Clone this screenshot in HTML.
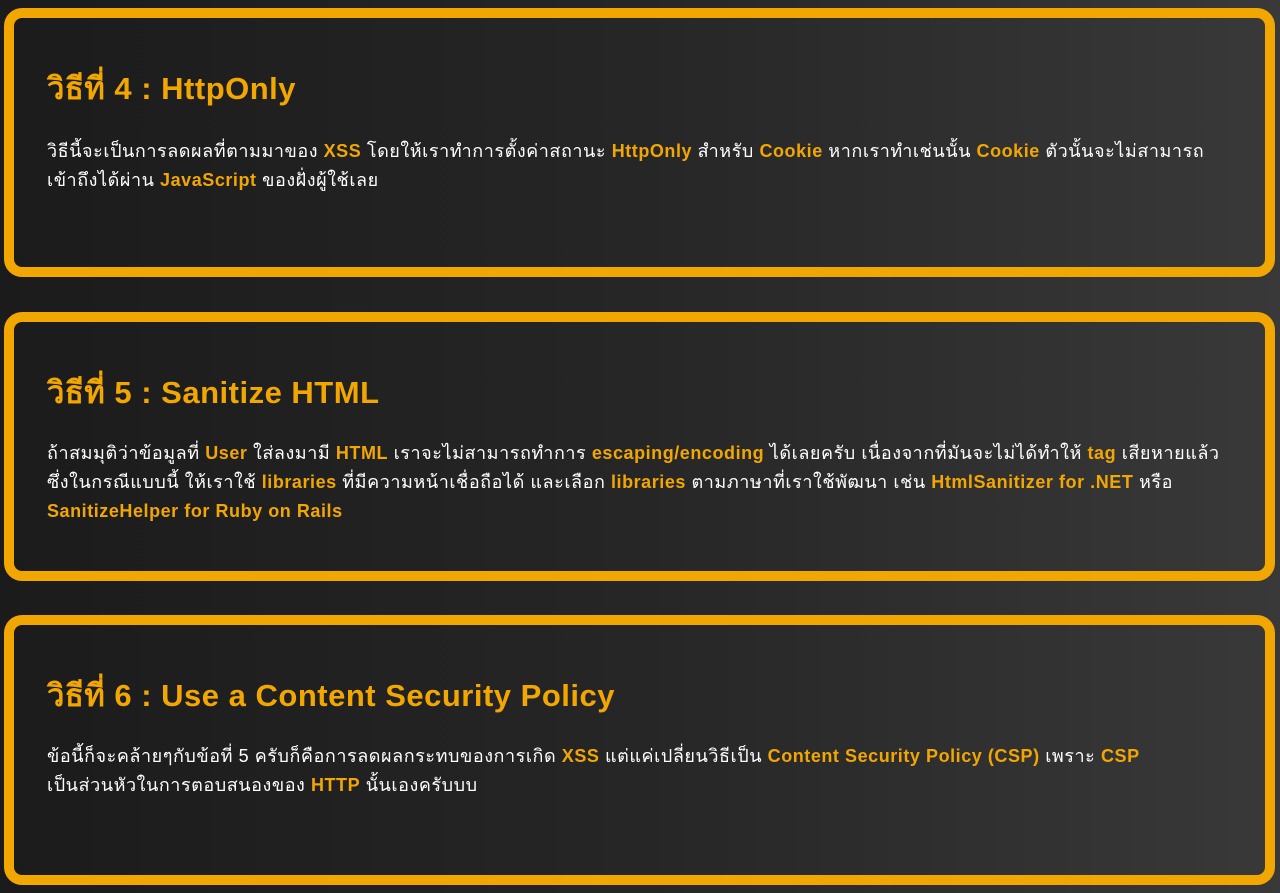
<!DOCTYPE html>
<html><head><meta charset="utf-8"><style>
html,body{margin:0;padding:0}
body{width:1280px;height:893px;overflow:hidden;background:linear-gradient(90deg,#1b1b1b 0%,#262626 50%,#393939 100%);font-family:"Liberation Sans","DejaVu Sans",sans-serif;color:#fff}
.card{position:absolute;left:4px;width:1251px;border:10px solid #f2a600;border-radius:18px;}
h2{position:absolute;left:33px;margin:0;font-size:31px;font-weight:bold;color:#f2a600;white-space:nowrap;letter-spacing:0.5px}
p{position:absolute;left:33px;margin:0;font-size:18px;line-height:29px;white-space:nowrap;letter-spacing:0.55px}
b{color:#f2a600}
</style></head><body>
<div class="card" style="top:8px;height:249px">
<h2 style="top:45px">วิธีที่ 4 : HttpOnly</h2>
<p style="top:119px">วิธีนี้จะเป็นการลดผลที่ตามมาของ <b>XSS</b> โดยให้เราทำการตั้งค่าสถานะ <b>HttpOnly</b> สำหรับ <b>Cookie</b> หากเราทำเช่นนั้น <b>Cookie</b> ตัวนั้นจะไม่สามารถ<br>เข้าถึงได้ผ่าน <b>JavaScript</b> ของฝั่งผู้ใช้เลย</p>
</div>
<div class="card" style="top:312px;height:249px">
<h2 style="top:45px">วิธีที่ 5 : Sanitize HTML</h2>
<p style="top:117px">ถ้าสมมุติว่าข้อมูลที่ <b>User</b> ใส่ลงมามี <b>HTML</b> เราจะไม่สามารถทำการ <b>escaping/encoding</b> ได้เลยครับ เนื่องจากที่มันจะไม่ได้ทำให้ <b>tag</b> เสียหายแล้ว<br>ซึ่งในกรณีแบบนี้ ให้เราใช้ <b>libraries</b> ที่มีความหน้าเชื่อถือได้ และเลือก <b>libraries</b> ตามภาษาที่เราใช้พัฒนา เช่น <b>HtmlSanitizer for .NET</b> หรือ<br><b>SanitizeHelper for Ruby on Rails</b></p>
</div>
<div class="card" style="top:615px;height:250px">
<h2 style="top:45px">วิธีที่ 6 : Use a Content Security Policy</h2>
<p style="top:117px">ข้อนี้ก็จะคล้ายๆกับข้อที่ 5 ครับก็คือการลดผลกระทบของการเกิด <b>XSS</b> แต่แค่เปลี่ยนวิธีเป็น <b>Content Security Policy (CSP)</b> เพราะ <b>CSP</b><br>เป็นส่วนหัวในการตอบสนองของ <b>HTTP</b> นั้นเองครับบบ</p>
</div>
</body></html>
